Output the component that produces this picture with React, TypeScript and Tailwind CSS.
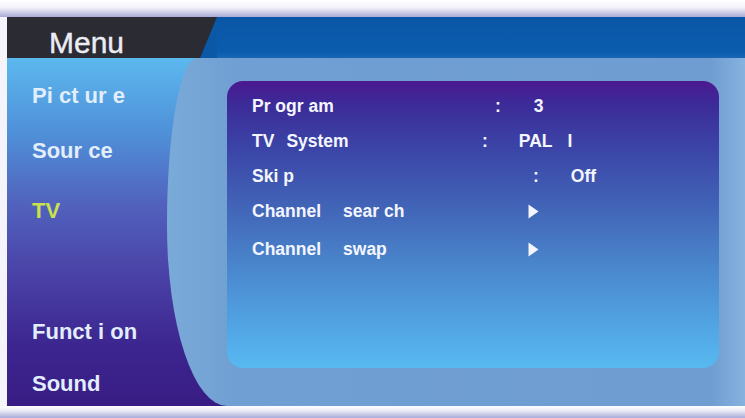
import React from "react";

const Arrow = () => (
  <svg width="11" height="15" viewBox="0 0 11 15" className="block">
    <polygon points="0.5,0.5 10.5,7.5 0.5,14.5" fill="#f4f6ff" />
  </svg>
);

export default function App() {
  const font = { fontFamily: '"Liberation Sans", Arial, sans-serif' };
  return (
    <div
      className="w-[745px] h-[418px] overflow-hidden flex flex-col bg-[#f4f4fa] pl-[7px]"
      style={font}
    >
      {/* top band */}
      <div className="h-[17px] -ml-[7px] bg-[linear-gradient(to_bottom,#ffffff_0%,#f2f2fa_45%,#a9a9d6_100%)]" />

      {/* header */}
      <div className="h-[41px] flex bg-[#0b58a7]">
        <div className="w-[210px] h-full bg-[#2b2b33] [clip-path:polygon(0_0,100%_0,calc(100%-17px)_100%,0_100%)] pl-[42px] pt-[11px]">
          <span className="block text-[30px] leading-none text-[#ececf4] tracking-[0px] [-webkit-text-stroke:0.4px_#ececf4]">
            Menu
          </span>
        </div>
        <div className="flex-1 bg-[linear-gradient(to_bottom,#0a56a6_0%,#0b5cad_85%,#1a66b4_100%)]" />
      </div>

      {/* body */}
      <div className="flex-1 flex bg-[linear-gradient(to_bottom,#5cb8ee_0%,#4f8fd8_22%,#5162bd_42%,#4a42a6_62%,#3d2690_82%,#381c84_100%)]">
        {/* sidebar */}
        <div className="w-[160px] shrink-0 flex flex-col pl-[25px] pt-[27px] text-[22px] leading-none font-bold text-[#e2eefc]">
          <span>Pi ct ur e</span>
          <span className="mt-[33px]">Sour ce</span>
          <span className="mt-[38px] text-[#c9e24a]">TV</span>
          <span className="mt-[99px]">Funct i on</span>
          <span className="mt-[30px]">Sound</span>
        </div>

        {/* main steel area */}
        <div className="flex-1 rounded-tl-[30px_165px] rounded-bl-[60px_180px] bg-[linear-gradient(to_right,#7aaad8_0%,#709fd3_12%,#6f9dd1_94%,#86b2df_100%)] pl-[60px] pt-[23px] pr-[26px] pb-[38px] flex">
          <div className="flex-1 rounded-[16px] bg-[linear-gradient(to_bottom,#4b1890_0%,#3c2b98_8%,#3b47a8_25%,#4266b8_45%,#4a87cc_65%,#51a4e2_85%,#58b9f1_100%)] pl-[25px] pt-[8px] text-[17.5px] font-bold text-[#f4f6ff]">
            <div className="h-[35px] leading-[35px] flex items-center">
              <span className="w-[243px] shrink-0">Pr ogr am</span>
              <span>:</span>
              <span className="ml-[33px]">3</span>
            </div>
            <div className="h-[35px] leading-[35px] flex items-center">
              <span className="w-[230px] shrink-0">
                TV<span className="ml-[12px]">System</span>
              </span>
              <span>:</span>
              <span className="ml-[31px]">PAL</span>
              <span className="ml-[15px]">I</span>
            </div>
            <div className="h-[35px] leading-[35px] flex items-center">
              <span className="w-[281px] shrink-0">Ski p</span>
              <span>:</span>
              <span className="ml-[32px]">Off</span>
            </div>
            <div className="h-[35px] leading-[35px] flex items-center">
              <span className="w-[276px] shrink-0">
                Channel<span className="ml-[22px]">sear ch</span>
              </span>
              <Arrow />
            </div>
            <div className="mt-[3px] h-[35px] leading-[35px] flex items-center">
              <span className="w-[276px] shrink-0">
                Channel<span className="ml-[22px]">swap</span>
              </span>
              <Arrow />
            </div>
          </div>
        </div>
      </div>

      {/* bottom band */}
      <div className="h-[12px] -ml-[7px] bg-[linear-gradient(to_bottom,#ffffff_0%,#eeeef8_35%,#a8acd8_100%)]" />
    </div>
  );
}
